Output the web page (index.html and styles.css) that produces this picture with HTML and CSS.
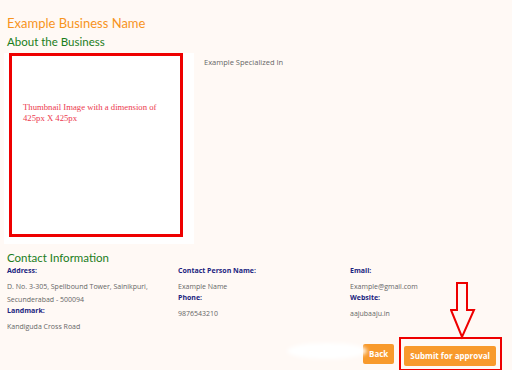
FILE: index.html
```html
<!DOCTYPE html>
<html lang="en">
  <head>
    <meta charset="UTF-8">
    <meta name="viewport" content="width=device-width, initial-scale=1.0">
    <title>Business Preview</title>
    <link rel="stylesheet" href="styles.css">
  </head>
  <body>
    <h1 class="biz-name">Example Business Name</h1>
    <h2 class="section-title">About the Business</h2>

    <!-- About section -->
    <div class="about">
      <div class="thumb-panel">
        <div class="thumb-box">
          <p class="thumb-text">Thumbnail Image with a dimension of 425px X 425px</p>
        </div>
      </div>
      <p class="specialized">Example Specialized In</p>
    </div>

    <!-- Contact section -->
    <h2 class="section-title contact-title">Contact Information</h2>
    <div class="contact-grid">
      <div class="contact-col">
        <div class="label">Address:</div>
        <div class="value">D. No. 3-305, Spellbound Tower, Sainikpuri,<br>Secunderabad - 500094</div>
        <div class="label">Landmark:</div>
        <div class="value">Kandiguda Cross Road</div>
      </div>
      <div class="contact-col">
        <div class="label">Contact Person Name:</div>
        <div class="value">Example Name</div>
        <div class="label">Phone:</div>
        <div class="value">9876543210</div>
      </div>
      <div class="contact-col">
        <div class="label">Email:</div>
        <div class="value">Example@gmail.com</div>
        <div class="label">Website:</div>
        <div class="value">aajubaaju.in</div>
      </div>
    </div>

    <!-- Actions -->
    <div class="actions">
      <div class="smudge"></div>
      <button class="btn">Back</button>
      <div class="highlight">
        <button class="btn">Submit for approval</button>
        <svg class="arrow" width="28" height="60" viewBox="0 0 28 60">
          <path d="M7 1 H17 V28 H24 L12 55 L1 28 H7 Z" fill="none" stroke="#e00" stroke-width="2"/>
        </svg>
      </div>
    </div>
  </body>
</html>
```

FILE: styles.css
```css
/* Page */
body {
  margin: 0;
  padding: 14px 7px 0 7px;
  background: #fff9f5;
  font-family: "Open Sans", "Noto Sans", sans-serif;
  height: 370px;
  box-sizing: border-box;
  overflow: hidden;
}

.biz-name {
  margin: 0;
  font-family: Lato, sans-serif;
  font-size: 13px;
  font-weight: 400;
  line-height: 18px;
  color: #f7941d;
}

.section-title {
  margin: 2px 0 0 0;
  font-family: Lato, sans-serif;
  font-size: 11.5px;
  font-weight: 400;
  line-height: 16px;
  color: #1b7d1b;
}

/* About */
.about {
  display: flex;
  margin-top: 3px;
  margin-left: -3px;
}

.thumb-panel {
  width: 185px;
  height: 191px;
  padding-left: 5px;
  background: #fff;
}

.thumb-box {
  width: 168px;
  height: 178px;
  border: 3px solid #e00;
  background: #fff;
}

.thumb-text {
  margin: 46px 0 0 11px;
  font-family: "Liberation Serif", serif;
  font-size: 8.7px;
  line-height: 11px;
  color: #ec3a4e;
}

.specialized {
  margin: 4px 0 0 10px;
  font-size: 7.5px;
  color: #666;
}

/* Contact */
.contact-title {
  margin-top: 6px;
}

.contact-grid {
  display: grid;
  grid-template-columns: 171px 172px 1fr;
}

.label {
  font-size: 7px;
  font-weight: 700;
  line-height: 10px;
  color: #1a237e;
}

.value {
  font-size: 7px;
  line-height: 13px;
  color: #666;
  padding: 4px 0 0 0;
}

/* Buttons */
.actions {
  position: relative;
  display: flex;
  justify-content: flex-end;
  align-items: center;
  gap: 5px;
  margin-top: 4px;
  padding-right: 3px;
}

.btn {
  height: 20px;
  padding: 0 6px;
  border: none;
  border-radius: 2px;
  background: #f89a2c;
  color: #fff;
  font-family: "Open Sans", sans-serif;
  font-size: 8px;
  font-weight: 700;
  cursor: pointer;
}

.highlight {
  position: relative;
  padding: 3px 4px 3px 3px;
  border: 2px solid #e00;
}

.arrow {
  position: absolute;
  left: 49px;
  top: -57px;
}

.smudge {
  position: absolute;
  left: 280px;
  top: 6px;
  width: 80px;
  height: 16px;
  background: #fff;
  border-radius: 50%;
  filter: blur(2px);
}
```
